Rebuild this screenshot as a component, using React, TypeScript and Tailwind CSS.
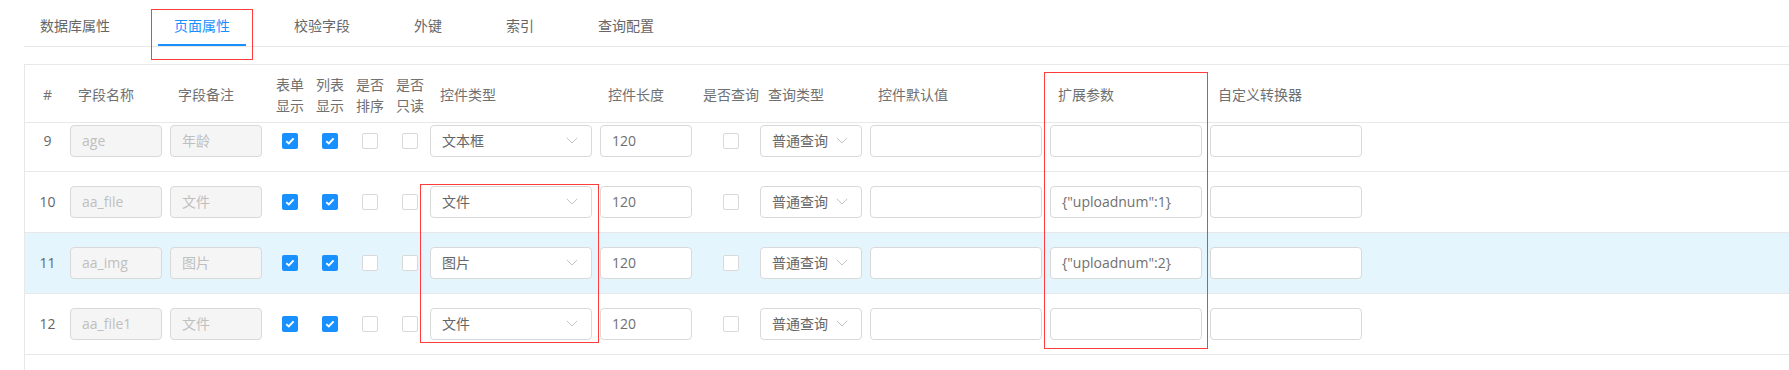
import React from "react";

const FONT = "font-['Open_Sans','Noto_Sans_CJK_SC',sans-serif]";

type Row = { n: number; name: string; remark: string; type: string; ext: string; hl?: boolean };

const rows: Row[] = [
  { n: 9, name: "age", remark: "年龄", type: "文本框", ext: "" },
  { n: 10, name: "aa_file", remark: "文件", type: "文件", ext: '{"uploadnum":1}' },
  { n: 11, name: "aa_img", remark: "图片", type: "图片", ext: '{"uploadnum":2}', hl: true },
  { n: 12, name: "aa_file1", remark: "文件", type: "文件", ext: "" },
];

const tabs = ["数据库属性", "页面属性", "校验字段", "外键", "索引", "查询配置"];

function Checkbox({ checked }: { checked?: boolean }) {
  if (checked) {
    return (
      <span className="flex h-4 w-4 items-center justify-center rounded-[2px] bg-[#1890ff]">
        <svg width="10" height="8" viewBox="0 0 10 8">
          <polyline points="1.3,4.2 3.8,6.4 8.6,1.4" fill="none" stroke="#fff" strokeWidth="2" />
        </svg>
      </span>
    );
  }
  return <span className="block h-4 w-4 rounded-[2px] border border-[#d9d9d9] bg-white" />;
}

function Input({ value, disabled, w }: { value?: string; disabled?: boolean; w: string }) {
  return (
    <div
      className={`${w} flex h-8 items-center rounded border border-[#d9d9d9] px-[11px] text-[14px] leading-[22px] ${
        disabled ? "bg-[#f5f5f5] text-[#bfbfbf]" : "bg-white text-[#707070]"
      }`}
    >
      {value}
    </div>
  );
}

function Select({ value, w }: { value: string; w: string }) {
  return (
    <div
      className={`${w} flex h-8 items-center justify-between rounded border border-[#d9d9d9] bg-white pl-[11px] pr-[13px] text-[14px] leading-[22px] text-[#666]`}
    >
      <span>{value}</span>
      <svg width="12" height="7" viewBox="0 0 12 7">
        <polyline points="0.8,0.8 6,6 11.2,0.8" fill="none" stroke="#c4c4c4" strokeWidth="1" />
      </svg>
    </div>
  );
}

function Head2({ a, b }: { a: string; b: string }) {
  return (
    <div className="flex w-[40px] flex-col items-center leading-[21px]">
      <span>{a}</span>
      <span>{b}</span>
    </div>
  );
}

export default function App() {
  return (
    <div className={`relative h-[370px] w-[1789px] overflow-hidden bg-white ${FONT}`}>
      {/* Tabs */}
      <div className="ml-[24px] flex gap-8 border-b border-[#e8e8e8]">
        {tabs.map((t, i) => (
          <div
            key={t}
            className={`border-b-2 px-4 pb-[7px] pt-[15px] text-[14px] leading-[22px] ${
              i === 1 ? "border-[#1890ff] text-[#1890ff]" : "border-transparent text-[#666]"
            }`}
          >
            {t}
          </div>
        ))}
      </div>

      {/* Table */}
      <div className="ml-[24px] mt-[17px] h-[306px] border-l border-t border-[#e8e8e8] text-[14px] text-[#707070]">
        {/* Header */}
        <div className="flex h-[58px] items-center border-b border-[#e8e8e8] pt-[2px] leading-[22px]">
          <div className="w-[45px] text-center">#</div>
          <div className="w-[100px] pl-2">字段名称</div>
          <div className="w-[100px] pl-2">字段备注</div>
          <Head2 a="表单" b="显示" />
          <Head2 a="列表" b="显示" />
          <Head2 a="是否" b="排序" />
          <Head2 a="是否" b="只读" />
          <div className="w-[170px] pl-[10px]">控件类型</div>
          <div className="w-[102px] pl-2">控件长度</div>
          <div className="w-[58px] text-center">是否查询</div>
          <div className="w-[110px] pl-2">查询类型</div>
          <div className="w-[180px] pl-2">控件默认值</div>
          <div className="w-[160px] pl-2">扩展参数</div>
          <div className="w-[160px] pl-2">自定义转换器</div>
        </div>

        {/* Body */}
        <div className="overflow-hidden">
          <div className="-mt-[12px]">
            {rows.map((r) => (
              <div
                key={r.n}
                className={`flex h-[61px] items-center border-b border-[#e8e8e8] pb-px ${r.hl ? "bg-[#e4f5fd]" : ""}`}
              >
                <div className="w-[45px] text-center text-[#666]">{r.n}</div>
                <div className="w-[100px]">
                  <Input value={r.name} disabled w="w-[92px]" />
                </div>
                <div className="w-[100px]">
                  <Input value={r.remark} disabled w="w-[92px]" />
                </div>
                <div className="flex w-[40px] justify-center">
                  <Checkbox checked />
                </div>
                <div className="flex w-[40px] justify-center">
                  <Checkbox checked />
                </div>
                <div className="flex w-[40px] justify-center">
                  <Checkbox />
                </div>
                <div className="flex w-[40px] justify-center">
                  <Checkbox />
                </div>
                <div className="w-[170px]">
                  <Select value={r.type} w="w-[162px]" />
                </div>
                <div className="w-[102px]">
                  <Input value="120" w="w-[92px]" />
                </div>
                <div className="flex w-[58px] justify-center">
                  <Checkbox />
                </div>
                <div className="w-[110px]">
                  <Select value="普通查询" w="w-[102px]" />
                </div>
                <div className="w-[180px]">
                  <Input w="w-[172px]" />
                </div>
                <div className="w-[160px]">
                  <Input value={r.ext} w="w-[152px]" />
                </div>
                <div className="w-[160px]">
                  <Input w="w-[152px]" />
                </div>
              </div>
            ))}
          </div>
        </div>
      </div>

      {/* Annotation boxes */}
      <div className="pointer-events-none absolute left-[151px] top-[9px] h-[51px] w-[102px] border border-[#ff3b3b]" />
      <div className="pointer-events-none absolute left-[420px] top-[184px] h-[159px] w-[179px] border border-[#ff3b3b]" />
      <div className="pointer-events-none absolute left-[1044px] top-[72px] h-[277px] w-[164px] border border-[#ff3b3b]" />
    </div>
  );
}
